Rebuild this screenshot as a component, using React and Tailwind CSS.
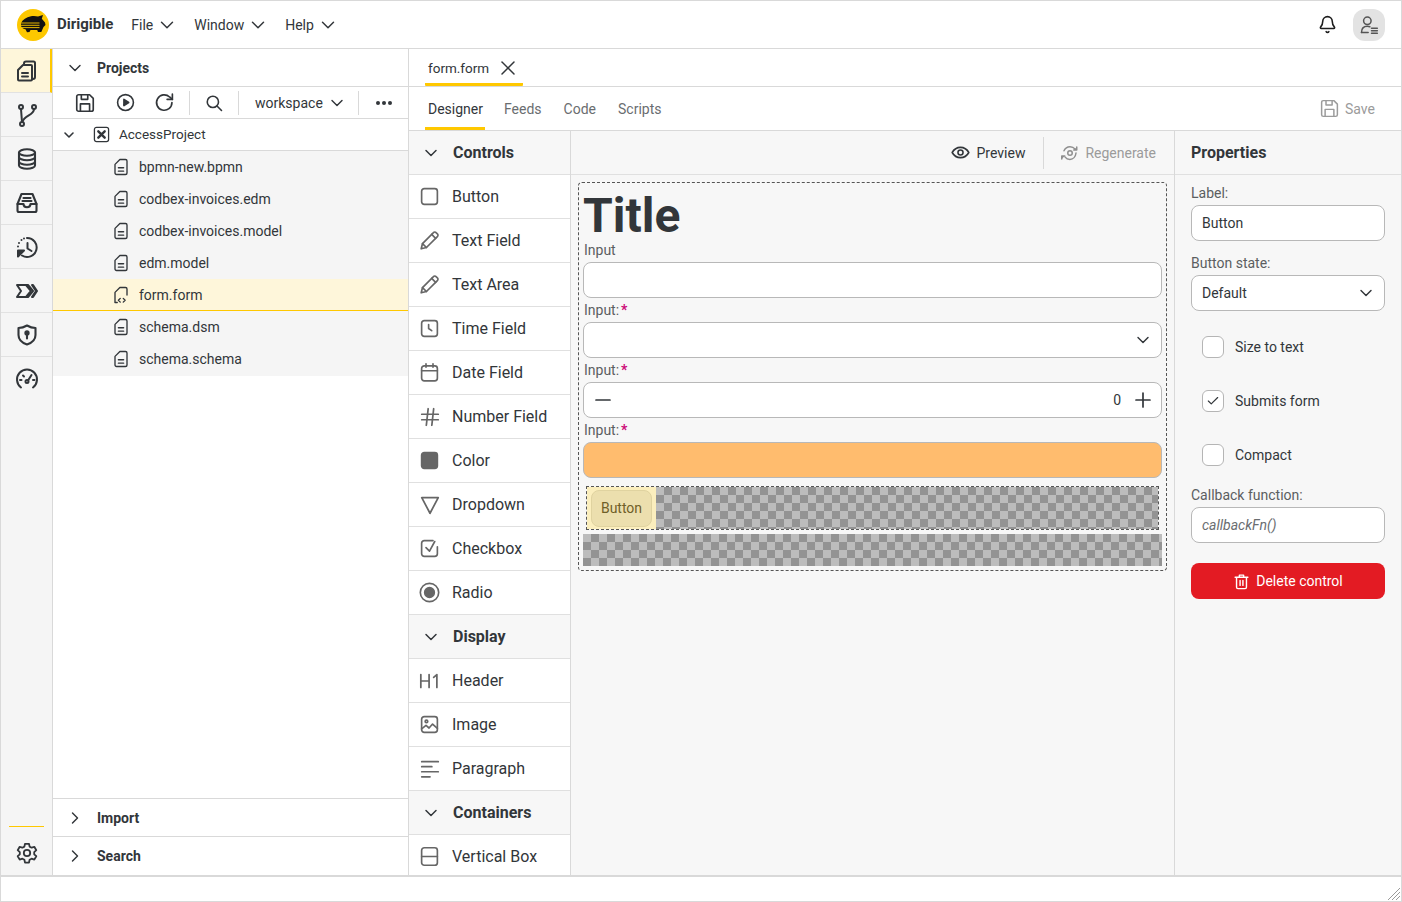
import React from 'react';
import { ChevronDown, ChevronRight, X, Bell, Minus, Plus, Check } from 'lucide-react';

const Svg = ({ size = 21, sw = 1.9, className = '', children }) => (
  <svg width={size} height={size} viewBox="0 0 24 24" fill="none" stroke="currentColor" strokeWidth={sw} strokeLinecap="round" strokeLinejoin="round" className={`shrink-0 ${className}`}>
    {children}
  </svg>
);

// workbench icons
const FilesIcon = () => <Svg size={24} sw={2}><path d="M9 6V4.500a2 2 0 0 1 2-2h7.500a1.500 1.500 0 0 1 1.500 1.500v14a2 2 0 0 1-2 2H17" /><path d="M12 6h4a1 1 0 0 1 1 1v13.500a1 1 0 0 1-1 1H4a1 1 0 0 1-1-1V11l5-5z" /><path d="M7 14h6M7 17.500h6" /></Svg>;
const BranchIcon = () => <Svg size={24} sw={2}><circle cx="6" cy="4" r="2" /><circle cx="19" cy="4" r="2" /><circle cx="7" cy="21" r="2" /><path d="M6 6.200 7 19" /><path d="M19 6.200c0 6-10 6-11.600 12.800" /></Svg>;
const DbIcon = () => <Svg size={24} sw={2.100}><ellipse cx="12" cy="5.500" rx="8" ry="3.200" /><path d="M4 5.500v13c0 1.800 3.600 3.200 8 3.200s8-1.400 8-3.200v-13" /><path d="M4 10c0 1.800 3.600 3.200 8 3.200s8-1.400 8-3.200M4 14.500c0 1.800 3.600 3.200 8 3.200s8-1.400 8-3.200" /></Svg>;
const InboxIcon = () => <Svg size={24} sw={2.100}><path d="M2.500 13 6.500 3h11l4 10v6.500a1.500 1.500 0 0 1-1.500 1.500H4a1.500 1.500 0 0 1-1.500-1.500z" /><path d="M2.500 13h6c0 2 1.500 3.200 3.500 3.200s3.500-1.200 3.500-3.200h6" /><path d="M8.500 7h7M7.500 10h9" /></Svg>;
const HistoryIcon = () => <Svg size={24} sw={2}><path d="M12 3a9.500 9.500 0 1 1-5 17.500" /><path d="M12.500 8v5.500l4 2.500" /><path d="M3 21.500v-6h6z" fill="currentColor" /><path d="M3 11.500v.01M4 8v.01M6.500 5v.01M9 3.500v.01" /></Svg>;
const ChevronsIcon = () => <Svg size={24} sw={2}><path d="M2 6h11l5 6-5 6H2l4-6z" /><path d="M11 6l5 6-5 6M17 6h1l4 6-4 6h-1l4-6z" /></Svg>;
const ShieldIcon = () => <Svg size={24} sw={2.100}><path d="M12 2.500c3 1.800 5.500 2.500 8.500 2.500v7c0 4.500-3.500 7.800-8.500 9.500-5-1.700-8.500-5-8.500-9.500V5c3 0 5.500-.7 8.500-2.500z" /><circle cx="12" cy="10" r="1.600" fill="currentColor" /><path d="M12 11v4.500" /></Svg>;
const GaugeIcon = () => <Svg size={24} sw={2}><path d="M6 20.500a10 10 0 1 1 12 0" /><path d="M16.500 8l-3.500 5.500" /><circle cx="12" cy="14.500" r="1.500" /><path d="M5 13h1.500M18 13h1.500M8 8.500l1 1" /></Svg>;
const GearIcon = () => <Svg size={24} sw={1.800}><circle cx="12" cy="12" r="3.200" /><path d="M10 2.800h4l.6 2.800 2 1.100 2.700-.9 2 3.400-2.100 1.900v2.200l2.100 1.900-2 3.400-2.700-.9-2 1.100-.6 2.800h-4l-.6-2.800-2-1.100-2.700.9-2-3.400 2.100-1.900v-2.200L2.700 9.200l2-3.400 2.700.9 2-1.100z" /></Svg>;

const FileIcon = () => <Svg size={18} sw={1.800}><path d="M10.500 2H18a2 2 0 0 1 2 2v16a2 2 0 0 1-2 2H6a2 2 0 0 1-2-2V8.500z" /><path d="M8.500 13h7M8.500 17.500h7" /></Svg>;
const FormFileIcon = () => <Svg size={18} sw={1.800}><path d="M4 21V8.500L10.500 2H18a2 2 0 0 1 2 2v8" /><path d="M4 22h3M11 16.500l-2.500 2.500 2.500 2.500M15 16.500l2.500 2.500-2.500 2.500" /></Svg>;
const ProjectIcon = () => <Svg size={17} sw={1.800}><rect x="2" y="2" width="20" height="20" rx="3" /><path d="M7.500 7.500l9 9M16.500 7.500l-9 9" strokeWidth="3.400" /></Svg>;
const SaveIcon = ({ size = 22, sw = 1.800 }) => <Svg size={size} sw={sw}><path d="M3 5a2 2 0 0 1 2-2h12l4 4v12a2 2 0 0 1-2 2H5a2 2 0 0 1-2-2z" /><path d="M8 3v5h7V3M7 21v-8h10v8" /></Svg>;
const PlayIcon = () => <Svg size={19} sw={2}><circle cx="12" cy="12" r="10" /><path d="M10 8l6 4-6 4z" fill="currentColor" /></Svg>;
const RefreshIcon = () => <Svg size={21} sw={1.900}><path d="M20.500 12a8.800 8.800 0 1 1-2.700-6.300L21 8.500" /><path d="M21 2.500v6h-6" /></Svg>;
const SearchIcon = () => <Svg size={18} sw={2.100}><circle cx="10.500" cy="10.500" r="7.500" /><path d="m16 16 6 6" /></Svg>;

const EyeIcon = () => <Svg size={19} sw={2}><path d="M1.500 12C4 7.500 7.500 5.500 12 5.500s8 2 10.500 6.500c-2.500 4.500-6 6.500-10.500 6.500S4 16.500 1.500 12z" /><circle cx="12" cy="12" r="3.200" /></Svg>;
const RegenIcon = () => <Svg size={18} sw={2}><path d="M4 9c1.500-3.500 4.500-5.500 8-5.500 3 0 5 1 6.500 3" /><path d="M20 12c-.5 5-4 8.500-8 8.500-3 0-5-1-6.500-3" /><path d="M21 4v4h-4M1 20v-4h4" fill="currentColor" /><circle cx="12" cy="12" r="3" /></Svg>;

const SquareIcon = () => <Svg><rect x="3" y="3" width="18" height="18" rx="3" /></Svg>;
const PencilIcon = () => <Svg><path d="M2.500 21.500 4 15.500 16.500 3a2 2 0 0 1 3 0l1.500 1.500a2 2 0 0 1 0 3L8.500 20z" /><path d="m14.500 5 4.500 4.500M4 15.500 8.500 20" /></Svg>;
const TimeIcon = () => <Svg><rect x="3" y="3" width="18" height="18" rx="3" /><path d="M11 7.500V12l3.500 2.500" /></Svg>;
const DateIcon = () => <Svg><rect x="3" y="4.500" width="18" height="17" rx="3" /><path d="M3 10h18M8 2v4M16 2v4" /></Svg>;
const HashIcon = () => <Svg size={22}><path d="M3 9h18M3 15h18M10 3 8 21M16 3l-2 18" /></Svg>;
const ColorIcon = () => <Svg><rect x="3" y="3" width="18" height="18" rx="3" fill="currentColor" /></Svg>;
const DropdownIcon = () => <Svg size={22}><path d="M3 4h18l-9 17z" /></Svg>;
const CheckboxIcon = () => <Svg><path d="M21 10v8a3 3 0 0 1-3 3H6a3 3 0 0 1-3-3V6a3 3 0 0 1 3-3h10" /><path d="m8 11 4 4 6-11" /></Svg>;
const RadioIcon = () => <Svg size={21}><circle cx="12" cy="12" r="10.500" /><circle cx="12" cy="12" r="5.500" fill="currentColor" /></Svg>;
const H1Icon = () => <Svg size={22}><path d="M2 5v14M11 5v14M2 12h9M16 8l3.500-3v14" /></Svg>;
const ImageIcon = () => <Svg><rect x="3" y="3" width="18" height="18" rx="3" /><circle cx="8.500" cy="8.500" r="1.500" /><path d="m3 17 5-4 3.500 3 4-4.500 5.500 5" /></Svg>;
const ParaIcon = () => <Svg size={22}><path d="M3 4h18M3 9.500h11M3 15h18M3 20.500h9" /></Svg>;
const VBoxIcon = () => <Svg><rect x="3" y="2" width="18" height="20" rx="3" /><path d="M3 12h18" /></Svg>;

const TrashIcon = () => <Svg size={17} sw={2}><path d="M3 6h18M9 6V3h6v3M5 6v14a2 2 0 0 0 2 2h10a2 2 0 0 0 2-2V6M10 10.500v7M14 10.500v7" /></Svg>;
const UserListIcon = () => <Svg size={20} sw={1.800}><circle cx="10" cy="7" r="4.500" /><path d="M3 21c0-5 3-7.500 7-7.500 1 0 2 .2 3 .5" /><path d="M3 21h8M15 16h7M15 19h7M15 22h7" /></Svg>;

const Logo = () => (
  <svg width="32" height="32" viewBox="0 0 32 32" className="shrink-0">
    <circle cx="16" cy="16" r="16" fill="#fdc800" />
    <path d="M4 14c2-3.500 5-6 10-6.800 2-.5 5-.4 7 .3l5-1.500-1.200 3.800L28 13.500l.5 2.500-2 2-2.200 5H21l-.8-2H13.500l-1 2-2.500.3-1.500-3C6.500 20 4.800 19 4 17z" fill="#111" />
    <path d="M3.500 14h19M3.500 16.300h19M3.500 18.600h19" stroke="#fdc800" strokeWidth="0.900" />
  </svg>
);

const railItems = [
  { id: 'files', Icon: FilesIcon, active: true },
  { id: 'git', Icon: BranchIcon },
  { id: 'db', Icon: DbIcon },
  { id: 'inbox', Icon: InboxIcon },
  { id: 'history', Icon: HistoryIcon },
  { id: 'jobs', Icon: ChevronsIcon },
  { id: 'security', Icon: ShieldIcon },
  { id: 'speed', Icon: GaugeIcon, last: true },
];

const treeFiles = ['bpmn-new.bpmn', 'codbex-invoices.edm', 'codbex-invoices.model', 'edm.model', 'form.form', 'schema.dsm', 'schema.schema'];

const paletteGroups = [
  {
    title: 'Controls',
    items: [
      ['Button', SquareIcon], ['Text Field', PencilIcon], ['Text Area', PencilIcon], ['Time Field', TimeIcon],
      ['Date Field', DateIcon], ['Number Field', HashIcon], ['Color', ColorIcon], ['Dropdown', DropdownIcon],
      ['Checkbox', CheckboxIcon], ['Radio', RadioIcon],
    ],
  },
  { title: 'Display', items: [['Header', H1Icon], ['Image', ImageIcon], ['Paragraph', ParaIcon]] },
  { title: 'Containers', items: [['Vertical Box', VBoxIcon]] },
];

const Required = () => <span className="ml-[2px] font-bold text-[#cc0a78]">*</span>;

const FieldLabel = ({ required }) => (
  <div className="flex h-6 items-center pb-px pl-px text-sm text-[#5b5e61]">
    Input{required !== undefined && ':'}{required && <Required />}
  </div>
);

const Checker = ({ className = '' }) => (
  <div className={`bg-[repeating-conic-gradient(#939393_0_25%,#bcbcbc_0_50%)] bg-[length:16px_16px] ${className}`} />
);

const PropCheck = ({ label, checked, className = '' }) => (
  <div className={`flex items-center pl-[11px] ${className}`}>
    <div className="flex h-[22px] w-[22px] items-center justify-center rounded-md border border-[#b5b5b5] bg-white">
      {checked && <Check size={14} strokeWidth={2} />}
    </div>
    <span className="ml-[11px] text-sm">{label}</span>
  </div>
);

export default function App() {
  return (
    <div className="flex h-[902px] w-[1402px] flex-col overflow-hidden border border-[#d9d9d9] bg-white font-['Roboto','Noto_Sans',sans-serif] text-[#32363a]">
      {/* shell header */}
      <header className="flex h-[48px] shrink-0 items-center border-b border-[#d9d9d9] pl-4 pr-4">
        <Logo />
        <span className="ml-2 text-[15px] font-bold">Dirigible</span>
        <span className="ml-[18px] text-sm">File</span>
        <ChevronDown size={22} strokeWidth={1.6} className="ml-[3px]" />
        <span className="ml-[16px] text-sm">Window</span>
        <ChevronDown size={22} strokeWidth={1.6} className="ml-[3px]" />
        <span className="ml-[16px] text-sm">Help</span>
        <ChevronDown size={22} strokeWidth={1.6} className="ml-[3px]" />
        <div className="ml-auto flex items-center gap-4">
          <Bell size={19} strokeWidth={2} className="text-[#1d1d1d]" />
          <div className="flex h-8 w-8 items-center justify-center rounded-xl bg-[#e3e3e3] text-[#555]">
            <UserListIcon />
          </div>
        </div>
      </header>

      <div className="flex min-h-0 flex-1">
        {/* activity rail */}
        <nav className="flex w-[52px] shrink-0 flex-col border-r border-[#d9d9d9] bg-[#f5f5f5]">
          {railItems.map(({ id, Icon, active, last }) => (
            <div
              key={id}
              className={`flex h-[44px] shrink-0 items-center justify-center ${last ? '' : 'border-b border-[#e2e2e2]'} ${active ? 'border-r-2 border-r-[#ffc800] bg-[#fef6da] pl-[2px]' : ''}`}
            >
              <Icon />
            </div>
          ))}
          <div className="mt-auto flex flex-col items-center">
            <div className="h-[1px] w-[35px] bg-[#ffc800]" />
            <div className="flex h-[48px] items-center justify-center pt-[3px]">
              <GearIcon />
            </div>
          </div>
        </nav>

        {/* projects panel */}
        <section className="flex w-[356px] shrink-0 flex-col border-r border-[#d9d9d9]">
          <div className="flex h-[38px] shrink-0 items-center border-b border-[#d9d9d9] pl-3 text-sm font-bold">
            <ChevronDown size={20} strokeWidth={1.7} />
            <span className="ml-3">Projects</span>
          </div>
          <div className="flex h-[32px] shrink-0 items-center border-b border-[#d9d9d9]">
            <div className="flex w-[137px] items-center justify-between pl-[21px] pr-[14px]">
              <SaveIcon />
              <PlayIcon />
              <RefreshIcon />
            </div>
            <div className="h-6 w-px bg-[#d9d9d9]" />
            <div className="flex w-[48px] justify-center"><SearchIcon /></div>
            <div className="h-6 w-px bg-[#d9d9d9]" />
            <div className="flex w-[120px] items-center pl-4 text-sm">
              workspace
              <ChevronDown size={20} strokeWidth={1.7} className="ml-1" />
            </div>
            <div className="h-6 w-px bg-[#d9d9d9]" />
            <div className="flex w-[49px] justify-center">
              <svg width="16" height="4" viewBox="0 0 16 4" fill="currentColor"><circle cx="2" cy="2" r="2" /><circle cx="8" cy="2" r="2" /><circle cx="14" cy="2" r="2" /></svg>
            </div>
          </div>
          <div className="flex h-[32px] shrink-0 items-center border-b border-[#d9d9d9] pl-2 text-sm">
            <ChevronDown size={16} strokeWidth={2.4} />
            <span className="ml-[16px]"><ProjectIcon /></span>
            <span className="ml-[9px] pt-px text-[13.5px]">AccessProject</span>
          </div>
          <ul className="bg-[#f5f5f5] pb-px">
            {treeFiles.map((name) => {
              const selected = name === 'form.form';
              return (
                <li
                  key={name}
                  className={`flex h-[32px] items-center pl-[59px] text-sm ${selected ? 'border-b border-[#ffc800] bg-[#fef6da]' : ''}`}
                >
                  {selected ? <FormFileIcon /> : <FileIcon />}
                  <span className="ml-[9px]">{name}</span>
                </li>
              );
            })}
          </ul>
          <div className="mt-auto flex h-[38px] shrink-0 items-center border-t border-[#d9d9d9] pl-3 text-sm font-bold">
            <ChevronRight size={20} strokeWidth={1.7} />
            <span className="ml-3">Import</span>
          </div>
          <div className="flex h-[39px] shrink-0 items-center border-t border-[#d9d9d9] pl-3 text-sm font-bold">
            <ChevronRight size={20} strokeWidth={1.7} />
            <span className="ml-3">Search</span>
          </div>
        </section>

        {/* editor area */}
        <main className="flex min-w-0 flex-1 flex-col">
          <div className="flex h-[38px] shrink-0 items-stretch border-b border-[#d9d9d9] pl-4">
            <div className="flex w-[98px] items-center rounded-b-[1px] border-b-[3px] border-[#ffc800] pl-[3px] pt-[3px] text-[13.5px]">
              <span className="pt-px">form.form</span>
              <X size={24} strokeWidth={1.5} className="ml-[7px]" />
            </div>
          </div>
          <div className="flex h-[44px] shrink-0 items-stretch border-b border-[#d9d9d9] pl-4 pr-[26px] text-sm text-[#6a6d70]">
            <div className="flex w-[60px] items-center border-b-[3px] border-[#ffc800] pl-[3px] pt-[3px] text-[#32363a]">Designer</div>
            <div className="ml-[19px] flex items-center">Feeds</div>
            <div className="ml-[22px] flex items-center">Code</div>
            <div className="ml-[22px] flex items-center">Scripts</div>
            <div className="ml-auto flex items-center gap-[5px] text-[#9b9b9b]">
              <SaveIcon size={21} sw={1.700} />
              Save
            </div>
          </div>

          <div className="flex min-h-0 flex-1">
            {/* palette */}
            <aside className="w-[162px] shrink-0 overflow-hidden border-r border-[#d9d9d9] bg-white">
              {paletteGroups.map((group) => (
                <div key={group.title}>
                  <div className="flex h-[44px] items-center border-b border-[#e0e0e0] bg-[#f7f7f7] pl-3 text-base font-bold">
                    <ChevronDown size={20} strokeWidth={1.8} />
                    <span className="ml-3">{group.title}</span>
                  </div>
                  {group.items.map(([label, Icon]) => (
                    <div key={label} className="flex h-[44px] items-center border-b border-[#e0e0e0]">
                      <div className="flex w-[43px] justify-center pr-[2px] text-[#666]"><Icon /></div>
                      <span className="text-base">{label}</span>
                    </div>
                  ))}
                </div>
              ))}
            </aside>

            {/* canvas */}
            <div className="flex min-w-0 flex-1 flex-col bg-[#f7f7f7]">
              <div className="flex h-[44px] shrink-0 items-center justify-end border-b border-[#e0e0e0] pr-[18px] text-sm">
                <EyeIcon />
                <span className="ml-[6px]">Preview</span>
                <div className="ml-[18px] mr-[17px] h-8 w-px bg-[#d9d9d9]" />
                <span className="text-[#8f8f8f]"><RegenIcon /></span>
                <span className="ml-[6px] text-[#9b9b9b]">Regenerate</span>
              </div>
              <div className="px-[7px] pt-[7px]">
                <div className="h-[389px] rounded border border-dashed border-[#555] px-1">
                  <div className="flex h-[55px] items-center pt-[10px] text-[48px] leading-none font-bold">Title</div>
                  <FieldLabel />
                  <div className="h-[36px] rounded-lg border border-[#b8b8b8] bg-white" />
                  <FieldLabel required />
                  <div className="flex h-[36px] items-center justify-end rounded-lg border border-[#b8b8b8] bg-white pr-2">
                    <ChevronDown size={20} strokeWidth={1.7} />
                  </div>
                  <FieldLabel required />
                  <div className="flex h-[36px] items-center rounded-lg border border-[#b8b8b8] bg-white pl-[7px] pr-[6px] text-sm">
                    <Minus size={24} strokeWidth={1.700} />
                    <span className="ml-auto">0</span>
                    <Plus size={24} strokeWidth={1.700} className="ml-[10px]" />
                  </div>
                  <FieldLabel required />
                  <div className="h-[36px] rounded-lg border border-[#b8b8b8] bg-[#ffbc6e]" />
                  <div className="mx-[3px] mt-2 flex h-[44px] border border-dashed border-[#555]">
                    <div className="flex w-[69px] shrink-0 items-center justify-center bg-[#fbeebd]">
                      <div className="flex h-[37px] w-[61px] items-center justify-center rounded-lg border border-[#e0d3a0] bg-[#ecdfae] text-sm text-[#6f6029]">Button</div>
                    </div>
                    <Checker className="flex-1" />
                  </div>
                  <Checker className="mt-1 h-[32px]" />
                </div>
              </div>
            </div>

            {/* properties */}
            <aside className="flex w-[227px] shrink-0 flex-col border-l border-[#d9d9d9] bg-[#f7f7f7]">
              <div className="flex h-[44px] shrink-0 items-center border-b border-[#e0e0e0] pl-4 text-base font-bold">Properties</div>
              <div className="px-4 pr-4 text-sm">
                <div className="mt-2 h-5 leading-5 text-[#5b5e61]">Label:</div>
                <div className="mt-[2px] flex h-[36px] w-[194px] items-center rounded-lg border border-[#b8b8b8] bg-white pl-[10px]">Button</div>
                <div className="mt-3 h-5 leading-5 text-[#5b5e61]">Button state:</div>
                <div className="mt-[2px] flex h-[36px] w-[194px] items-center justify-between rounded-lg border border-[#b8b8b8] bg-white pl-[10px] pr-2">
                  Default
                  <ChevronDown size={20} strokeWidth={1.7} />
                </div>
                <PropCheck label="Size to text" className="mt-[25px]" />
                <PropCheck label="Submits form" checked className="mt-[32px]" />
                <PropCheck label="Compact" className="mt-[32px]" />
                <div className="mt-[19px] h-5 leading-5 text-[#5b5e61]">Callback function:</div>
                <div className="mt-[2px] flex h-[36px] w-[194px] items-center rounded-lg border border-[#b8b8b8] bg-white pl-[10px] text-[#6a6d70] italic">callbackFn()</div>
                <div className="mt-5 flex h-[36px] w-[194px] items-center justify-center gap-[6px] rounded-lg bg-[#e31b23] text-white">
                  <TrashIcon />
                  Delete control
                </div>
              </div>
            </aside>
          </div>
        </main>
      </div>

      {/* status bar */}
      <footer className="flex h-[26px] shrink-0 items-end justify-end border-t-2 border-[#d9d9d9] bg-white">
        <svg width="14" height="14" viewBox="0 0 14 14" stroke="#9a9a9a" strokeWidth="1"><path d="M13 1 1 13M13 5 5 13M13 9 9 13" /></svg>
      </footer>
    </div>
  );
}
